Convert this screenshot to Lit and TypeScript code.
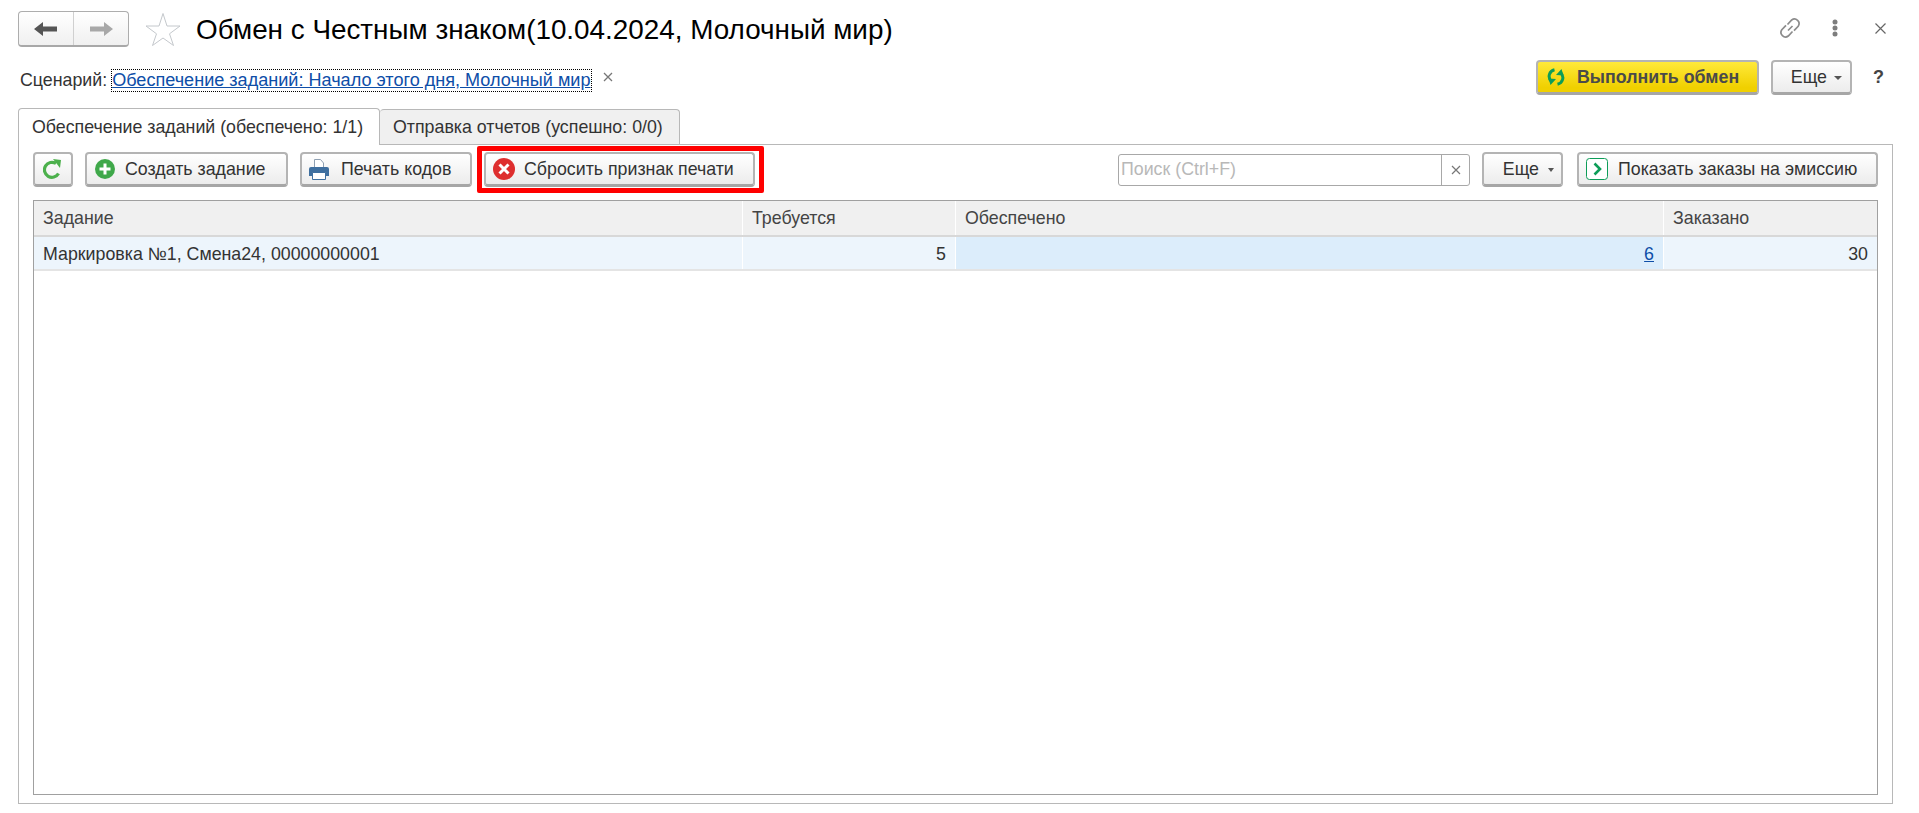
import { LitElement, html, css } from 'lit';
import { customElement } from 'lit/decorators.js';

const jobs = [{ name: 'Маркировка №1, Смена24, 00000000001', required: 5, provided: 6, ordered: 30 }];

@customElement('app-root')
export class AppRoot extends LitElement {
    static styles = css`
        :host {
            display: block;
            height: 813px;
            overflow: hidden;
            background: #fff;
            color: #333;
            font: 17.8px 'Liberation Sans', Arial, sans-serif;
        }

        svg {
            display: block;
            flex: none;
        }

        .title-row {
            display: flex;
            align-items: center;
            height: 36px;
            padding: 11px 0 0 18px;
        }

        .nav {
            display: flex;
            width: 111px;
            height: 36px;
            box-sizing: border-box;
            border: 1px solid #adadad;
            border-bottom: 2px solid #a8a8a8;
            border-radius: 4px;
            background: linear-gradient(#fff, #f0f0f0);
        }

        .nav div {
            flex: 1;
            display: flex;
            align-items: center;
            justify-content: center;
        }

        .nav div + div {
            border-left: 1px solid #d0d0d0;
        }

        .star {
            margin-left: 16px;
        }

        h1 {
            margin: 1px 0 0 15px;
            font-size: 27.85px;
            font-weight: 400;
            color: #000;
            white-space: nowrap;
        }

        .window-icons {
            display: flex;
            align-items: center;
            margin: -2px 0 0 auto;
            padding-right: 33px;
        }

        .kebab {
            margin: 0 36px 0 29px;
        }

        .scenario-row {
            display: flex;
            align-items: center;
            height: 35px;
            margin-top: 13px;
            padding-left: 20px;
        }

        .scenario-box {
            display: flex;
            align-items: center;
            padding-top: 6px;
        }

        .link {
            color: #0e4ea8;
            text-decoration: underline;
        }

        .scenario {
            margin-left: 4px;
            padding: 1px;
            font-size: 18.08px;
            outline: 1px dotted #000;
            outline-offset: -1px;
            white-space: nowrap;
        }

        .clear {
            margin: -7px 0 0 11px;
        }

        .actions {
            display: flex;
            align-items: center;
            margin-left: auto;
        }

        button {
            display: flex;
            align-items: center;
            height: 35px;
            box-sizing: border-box;
            padding: 0 8px;
            border: 2px solid #b4b4b4;
            border-bottom: 3px solid #a6a6a6;
            border-radius: 4px;
            background: linear-gradient(#fff, #ececec);
            color: #333;
            font: inherit;
            white-space: nowrap;
        }

        button svg {
            margin-right: 10px;
        }

        .primary {
            width: 223px;
            padding-left: 9px;
            background: linear-gradient(#ffe93a, #f0d000 85%);
            font-weight: 700;
            color: #4a4a4a;
        }

        .primary svg {
            margin-right: 12px;
        }

        .more {
            width: 81px;
            margin-left: 12px;
            justify-content: flex-end;
            padding: 0 8px 0 0;
        }

        .more i {
            width: 0;
            height: 0;
            margin: 2px 0 0 7px;
            border: 4px solid transparent;
            border-top: 4px solid #555;
            border-bottom: 0;
        }

        .help {
            margin: 0 35px 0 21px;
            font-size: 18px;
            font-weight: 700;
            color: #444;
        }

        .tabs {
            display: flex;
            margin: 13px 0 0 18px;
            height: 36px;
            box-sizing: border-box;
        }

        .tab {
            display: flex;
            align-items: center;
            box-sizing: border-box;
            padding: 0 13px;
            border: 1px solid #b8b8b8;
            border-bottom: 0;
            border-radius: 4px 4px 0 0;
            white-space: nowrap;
        }

        .tab.active {
            width: 362px;
            background: #fff;
            position: relative;
            z-index: 1;
            margin-bottom: -1px;
        }

        .tab.off {
            width: 300px;
            margin-top: 1px;
            background: #f0f0f0;
            border-left: 0;
        }

        .panel {
            box-sizing: border-box;
            width: 1875px;
            height: 660px;
            margin-left: 18px;
            padding: 7px 14px 8px;
            border: 1px solid #b8b8b8;
            display: flex;
            flex-direction: column;
        }

        .toolbar {
            display: flex;
            align-items: center;
            height: 35px;
        }

        .refresh {
            width: 40px;
            padding: 0;
            justify-content: center;
        }

        .refresh svg {
            margin: 0;
        }

        .create {
            width: 203px;
            margin-left: 12px;
        }

        .print {
            width: 172px;
            margin-left: 12px;
            padding-left: 7px;
        }

        .print svg {
            margin-right: 12px;
        }

        .marked {
            position: relative;
            width: 271px;
            margin-left: 12px;
        }

        .marked button {
            width: 100%;
            padding-left: 7px;
        }

        .marked svg {
            margin-right: 9px;
        }

        /* red annotation drawn over the screenshot */
        .marked::after {
            content: '';
            position: absolute;
            inset: -6px -9px -6px -7px;
            border: 5px solid #f00;
            border-radius: 2px;
        }

        .search {
            display: flex;
            width: 352px;
            height: 32px;
            box-sizing: border-box;
            margin-left: auto;
            border: 1px solid #a8a8a8;
            border-radius: 3px;
            color: #b8b8b8;
        }

        .search span {
            flex: 1;
            line-height: 29px;
            padding-left: 2px;
        }

        .search div {
            width: 27px;
            display: flex;
            align-items: center;
            justify-content: center;
            border-left: 1px solid #a8a8a8;
        }

        .toolbar .more {
            margin-left: 12px;
            padding-right: 7px;
        }

        .toolbar .more i {
            margin-left: 9px;
            border-width: 4px 3.5px 0;
        }

        .show {
            width: 301px;
            margin-left: 14px;
            padding-left: 7px;
        }

        .table {
            flex: 1;
            margin-top: 13px;
            border: 1px solid #a0a0a0;
        }

        .grid {
            display: grid;
            grid-template-columns: 708px 213px 708px 1fr;
            box-sizing: border-box;
        }

        .head {
            height: 36px;
            border-bottom: 2px solid #d8d8d8;
            background: #f0f0f0;
        }

        .head div {
            display: flex;
            align-items: center;
            padding-left: 9px;
            border-left: 1px solid #fff;
            color: #444;
        }

        .head div:first-child {
            border-left: 0;
        }

        .row {
            height: 34px;
            border-bottom: 2px solid #e4e4e4;
            background: #edf5fc;
        }

        .row div {
            display: flex;
            align-items: center;
            padding: 2px 9px 0;
            border-left: 1px solid #fff;
        }

        .row div:first-child {
            border-left: 0;
        }

        .num {
            justify-content: flex-end;
        }

        .row .current {
            background: #dcedfb;
        }
    `;

    render() {
        return html`
            <div class="title-row">
                <div class="nav">
                    <div>
                        <svg width="26" height="18" viewBox="0 0 26 18"><path fill="#555" d="M1 9l9-7v4.500h14v5H10V16z"/></svg>
                    </div>
                    <div>
                        <svg width="26" height="18" viewBox="0 0 26 18"><path fill="#a8a8a8" d="M25 9l-9-7v4.500H2v5h14V16z"/></svg>
                    </div>
                </div>
                <svg class="star" width="36" height="34" viewBox="0 0 36 34">
                    <path fill="none" stroke="#c4c8cc" d="M18 1.500l4 12.500h13l-10.500 7.800 4 11.700L18 26l-10.500 7.500 4-11.700L1 14h13z"/>
                </svg>
                <h1>Обмен с Честным знаком(10.04.2024, Молочный мир)</h1>
                <div class="window-icons">
                    <svg width="24" height="24" viewBox="0 0 24 24" fill="none" stroke="#8c8c8c" stroke-width="1.700">
                        <path d="M10 14.500l4.500-4.500M9.500 8.500l4.200-4.500a4.600 4.600 0 0 1 6.500 6.300l-4.200 4.400M14.500 15.500l-4.200 4.500a4.600 4.600 0 0 1-6.500-6.300L8 9.300"/>
                    </svg>
                    <svg class="kebab" width="8" height="18" viewBox="0 0 8 18" fill="#7d7d7d">
                        <circle cx="4" cy="3" r="2.500"/><circle cx="4" cy="9" r="2.500"/><circle cx="4" cy="15" r="2.500"/>
                    </svg>
                    <svg width="11" height="11" viewBox="0 0 11 11" stroke="#666" stroke-width="1.200"><path d="M.5.5l10 10M10.500.5l-10 10"/></svg>
                </div>
            </div>

            <div class="scenario-row">
                <div class="scenario-box">
                    <span>Сценарий:</span>
                    <span class="link scenario">Обеспечение заданий: Начало этого дня, Молочный мир</span>
                    <svg class="clear" width="10" height="10" viewBox="0 0 10 10" stroke="#777" stroke-width="1.300"><path d="M1 1l8 8M9 1L1 9"/></svg>
                </div>
                <div class="actions">
                    <button class="primary">
                        <svg width="18" height="18" viewBox="0 0 18 18" fill="none" stroke="#0d9d58" stroke-width="3">
                            <path d="M7.500 1.800C2.500 3 0 9 4.500 13.500M10.500 16.200c5-1.200 7.500-7.200 3-11.700"/>
                            <path fill="#0d9d58" stroke="none" d="M1.500 10.500l7.500.5-5.500 6zM16.500 7.500L9 7l5.500-6z"/>
                        </svg>
                        Выполнить обмен
                    </button>
                    <button class="more">Еще<i></i></button>
                    <span class="help">?</span>
                </div>
            </div>

            <div class="tabs">
                <div class="tab active">Обеспечение заданий (обеспечено: 1/1)</div>
                <div class="tab off">Отправка отчетов (успешно: 0/0)</div>
            </div>

            <div class="panel">
                <div class="toolbar">
                    <button class="refresh">
                        <svg width="20" height="22" viewBox="0 0 20 22" fill="none">
                            <path stroke="#4cb04c" stroke-width="3.200" d="M15.500 15.500A7.500 7.500 0 1 1 13 5.500"/>
                            <path fill="#4cb04c" d="M10 1l8 1-1 8z"/>
                        </svg>
                    </button>
                    <button class="create">
                        <svg width="20" height="20" viewBox="0 0 20 20">
                            <circle cx="10" cy="10" r="10" fill="#3fa84a"/>
                            <path stroke="#fff" stroke-width="3" d="M10 4.500v11M4.500 10h11"/>
                        </svg>
                        Создать задание
                    </button>
                    <button class="print">
                        <svg width="20" height="22" viewBox="0 0 20 22">
                            <path fill="#fff" stroke="#8fa0b2" d="M5.500 1.500h6l3 3.500v6h-9z"/>
                            <path fill="#3f6f9f" d="M2 9h16a2 2 0 0 1 2 2v7h-3v-3H3v3H0v-7a2 2 0 0 1 2-2z"/>
                            <path fill="#fff" stroke="#3f6f9f" d="M3.500 14.500h13v7h-13z"/>
                        </svg>
                        Печать кодов
                    </button>
                    <div class="marked">
                        <button>
                            <svg width="22" height="22" viewBox="0 0 22 22">
                                <circle cx="11" cy="11" r="11" fill="#de2f2f"/>
                                <path stroke="#fff" stroke-width="3" d="M6.500 6.500l9 9M15.500 6.500l-9 9"/>
                            </svg>
                            Сбросить признак печати
                        </button>
                    </div>
                    <div class="search">
                        <span>Поиск (Ctrl+F)</span>
                        <div>
                            <svg width="10" height="10" viewBox="0 0 10 10" stroke="#777" stroke-width="1.200"><path d="M1 1l8 8M9 1L1 9"/></svg>
                        </div>
                    </div>
                    <button class="more">Еще<i></i></button>
                    <button class="show">
                        <svg width="22" height="22" viewBox="0 0 22 22" fill="none">
                            <rect x=".5" y=".5" width="21" height="21" rx="3" fill="#fff" stroke="#0d9d58"/>
                            <path stroke="#0d9d58" stroke-width="2.600" d="M8.500 5.500l5.500 5.500-5.500 5.500"/>
                        </svg>
                        Показать заказы на эмиссию
                    </button>
                </div>

                <div class="table">
                    <div class="grid head">
                        <div>Задание</div>
                        <div>Требуется</div>
                        <div>Обеспечено</div>
                        <div>Заказано</div>
                    </div>
                    ${jobs.map(j => html`
                        <div class="grid row">
                            <div>${j.name}</div>
                            <div class="num">${j.required}</div>
                            <div class="num current"><span class="link">${j.provided}</span></div>
                            <div class="num">${j.ordered}</div>
                        </div>
                    `)}
                </div>
            </div>
        `;
    }
}
